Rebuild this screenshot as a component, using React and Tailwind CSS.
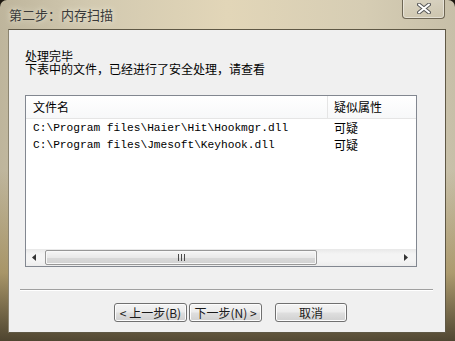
import React from "react";

const cjk = { fontFamily: '"Noto Sans CJK SC", "Liberation Sans", sans-serif' };
const mono = { fontFamily: '"Liberation Mono", "Noto Sans CJK SC", monospace' };

function Btn({ children, w }) {
  return (
    <div
      className={`${w} h-[19px] flex items-center justify-center rounded-[3px] border border-[#707070] bg-[linear-gradient(to_bottom,#f4f4f4_0%,#ececec_45%,#dedede_55%,#d0d0d0_100%)] text-[12px] leading-none text-[#1a1a1a] shadow-[inset_0_0_0_1px_#fcfcfc]`}
      style={cjk}
    >
      {children}
    </div>
  );
}

export default function App() {
  return (
    <div className="w-[455px] h-[341px] overflow-hidden bg-[#1c1810]">
      <div className="relative w-[455px] h-[341px] rounded-t-[7px] overflow-hidden flex flex-col bg-[linear-gradient(to_right,#beb59c_0%,#d2c9b0_20%,#e2d6b8_50%,#d6cdb4_80%,#c7bfa8_100%)]">
        {/* bottom darkening of frame */}
        <div className="absolute inset-0 pointer-events-none bg-[linear-gradient(to_bottom,rgba(0,0,0,0)_50%,rgba(140,110,40,0.45)_80%,rgba(50,40,20,0.8)_100%)]" />
        {/* title bar */}
        <div className="relative h-[29px] flex items-start justify-between">
          <div className="pl-[9px] pt-[7px] text-[13px] leading-[15px] text-[#3a3a3a] [text-shadow:0_0_6px_rgba(255,255,240,0.9)]" style={cjk}>
            第二步：内存扫描
          </div>
          <div className="mr-[10px] -mt-px w-[43px] h-[20px] rounded-b-[4px] border border-t-0 border-[#6e6654] bg-[linear-gradient(to_bottom,rgba(255,255,255,0.25),rgba(255,255,255,0.05))] shadow-[inset_0_0_0_1px_rgba(255,255,255,0.45)] flex items-center justify-center">
            <svg width="14" height="11" viewBox="0 0 14 11">
              <path d="M2 1.5 L12 9.5 M12 1.5 L2 9.5" stroke="#5a5a5a" strokeWidth="4" strokeLinecap="round" />
              <path d="M2 1.5 L12 9.5 M12 1.5 L2 9.5" stroke="#ffffff" strokeWidth="2" strokeLinecap="round" />
            </svg>
          </div>
        </div>
        {/* client area */}
        <div className="relative ml-[8px] mr-[9px] h-[304px] border border-[#5f5845] border-l-[#8c8572] bg-[#f0f0f0] flex flex-col">
          <div className="pl-[16px] pt-[19px] text-[12px] leading-[13px] text-black" style={cjk}>
            <div className="h-[13px]">处理完毕</div>
            <div className="h-[13px]">下表中的文件，已经进行了安全处理，请查看</div>
          </div>
          {/* list */}
          <div className="ml-[16px] mt-[20px] w-[392px] h-[172px] border border-[#828790] bg-white flex flex-col">
            <div className="h-[23px] flex border-b border-[#e5e5e5] bg-[linear-gradient(to_bottom,#ffffff,#f7f8f9)] text-[12px] text-black" style={cjk}>
              <div className="w-[302px] pl-[7px] flex items-center border-r border-[#e5e5e5]">文件名</div>
              <div className="pl-[6px] flex items-center">疑似属性</div>
            </div>
            <div className="pt-[1px]">
              {[
                "C:\\Program files\\Haier\\Hit\\Hookmgr.dll",
                "C:\\Program files\\Jmesoft\\Keyhook.dll",
              ].map((p) => (
                <div key={p} className="h-[17px] flex items-center text-black">
                  <div className="w-[302px] pl-[7px] text-[11.2px] leading-none whitespace-nowrap" style={mono}>
                    {p}
                  </div>
                  <div className="pl-[6px] -mt-[2px] text-[12px] leading-none" style={cjk}>
                    可疑
                  </div>
                </div>
              ))}
            </div>
            <div className="flex-1" />
            {/* horizontal scrollbar */}
            <div className="h-[17px] flex items-center bg-[linear-gradient(to_bottom,#e8e8e8,#f4f4f4_30%,#f4f4f4_70%,#ececec)]">
              <div className="w-[19px] h-full flex items-center justify-center pr-[3px]">
                <svg width="4" height="7" viewBox="0 0 4 7"><path d="M4 0 L0 3.5 L4 7 Z" fill="#333" /></svg>
              </div>
              <div className="w-[272px] h-[15px] rounded-[2px] border border-[#979797] bg-[linear-gradient(to_bottom,#f6f6f6,#e9e9e9_50%,#d9d9d9_51%,#d2d2d2)] shadow-[inset_0_0_0_1px_#f8f8f8] flex items-center justify-center">
                <svg width="7" height="7" viewBox="0 0 7 7">
                  <path d="M0.5 0 V7 M3.5 0 V7 M6.5 0 V7" stroke="#4a4a4a" strokeWidth="1" />
                </svg>
              </div>
              <div className="flex-1" />
              <div className="w-[20px] h-full flex items-center justify-center">
                <svg width="4" height="7" viewBox="0 0 4 7"><path d="M0 0 L4 3.5 L0 7 Z" fill="#333" /></svg>
              </div>
            </div>
          </div>
          {/* separator */}
          <div className="ml-[11px] mr-[12px] mt-[22px] h-[2px] border-t border-[#a0a0a0] border-b border-b-white" />
          {/* buttons */}
          <div className="mt-[12px] pl-[105px] flex">
            <Btn w="w-[73px]">&lt; 上一步(B)</Btn>
            <div className="w-[2px]" />
            <Btn w="w-[73px]">下一步(N) &gt;</Btn>
            <div className="w-[13px]" />
            <Btn w="w-[72px]">取消</Btn>
          </div>
        </div>
      </div>
    </div>
  );
}
